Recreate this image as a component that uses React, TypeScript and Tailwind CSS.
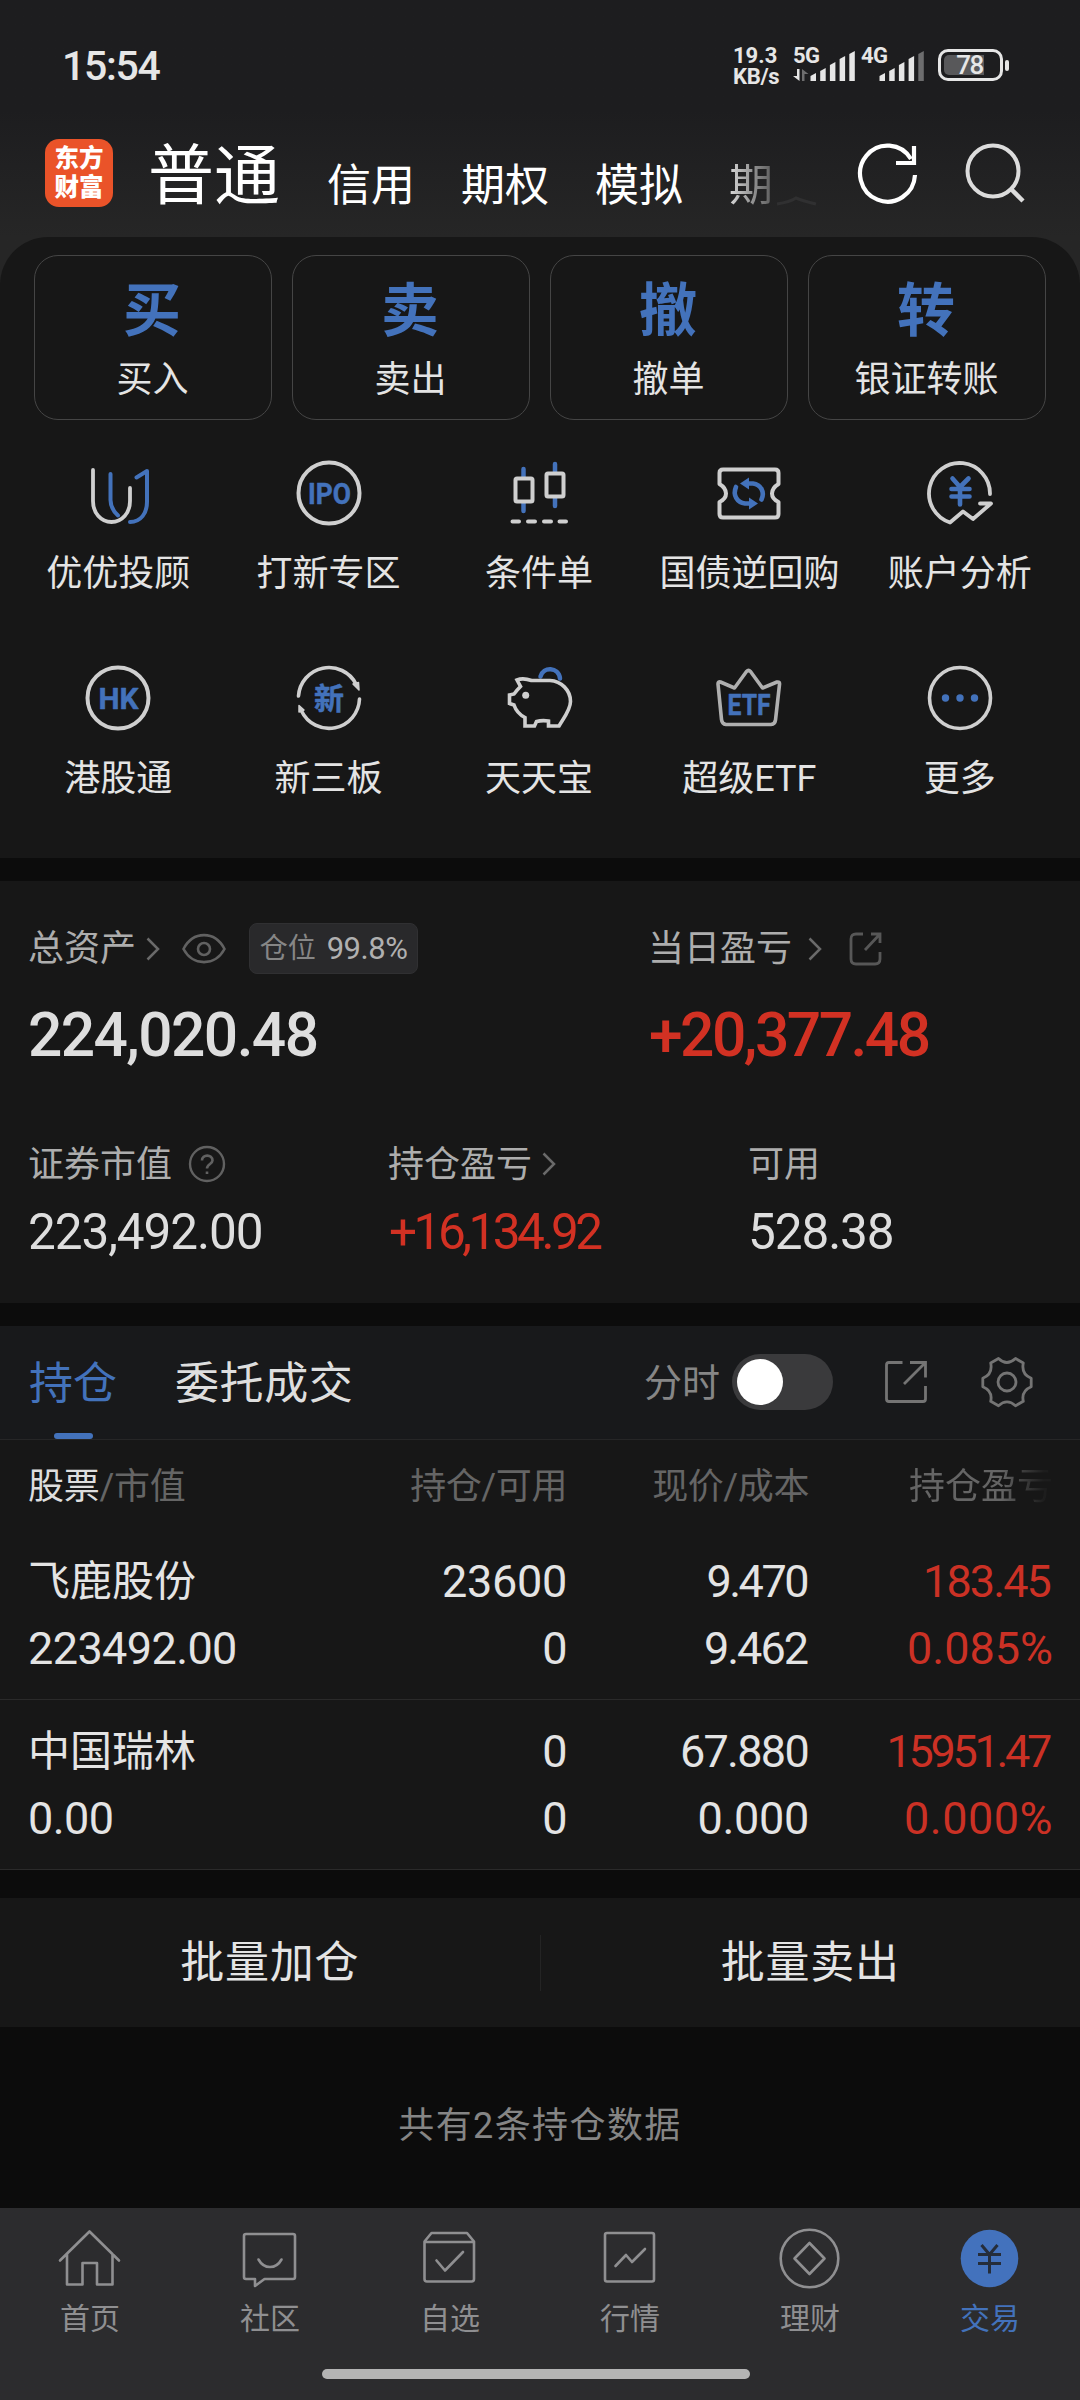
import type { ReactNode } from "react";

const BLUE = "#4372bb";
const LIGHT = "#cfcfcf";

const FONT = "font-['Roboto','Noto_Sans_CJK_SC',sans-serif]";

/* ---------- status bar ---------- */

function Bars({ dimLast = false }: { dimLast?: boolean }) {
  const tops = [24, 19, 13, 7, 2];
  return (
    <svg className="absolute bottom-0 right-0 h-[31px] w-[46px]" viewBox="0 0 46 31">
      {tops.map((t, i) => (
        <path
          key={i}
          d={`M${i * 9.7 + 0.5} 31V${t + 2}L${i * 9.7 + 6} ${t - 1}V31Z`}
          fill={dimLast && i === 4 ? "#6d6d6e" : "#e6e6e6"}
        />
      ))}
    </svg>
  );
}

function StatusBar() {
  return (
    <div className="flex h-[110px] items-start justify-between pl-[62px] pr-[71px] text-[#e6e6e6]">
      <div className="mt-[46px] text-[41px] font-medium leading-[41px] tracking-[-1.300px]">15:54</div>
      <div className="mt-[45px] flex h-[40px] items-start font-bold">
        <div className="w-[60px] text-[22px] leading-[21px]">
          <div>19.3</div>
          <div className="whitespace-nowrap tracking-[-0.3px]">KB/s</div>
        </div>
        <div className="relative h-[36px] w-[63px]">
          <span className="block text-[22px] leading-[22px] tracking-[-0.5px]">5G</span>
          <svg className="absolute bottom-0 left-0 h-[12px] w-[16px]" viewBox="0 0 16 12">
            <path d="M4 0H6.5V12L0 7H4Z" fill="#e6e6e6" />
            <path d="M9 12V0L15.5 5H11.5V12Z" fill="#6d6d6e" />
          </svg>
          <Bars />
        </div>
        <div className="relative ml-[5px] h-[36px] w-[64px]">
          <span className="block text-[22px] leading-[22px] tracking-[-0.5px]">4G</span>
          <Bars dimLast />
        </div>
        <div className="ml-[13px] mt-[4px] flex items-center gap-[2px]">
          <div className="h-[32px] w-[65px] rounded-[10px] border-[3px] border-[#e6e6e6] p-[3px]">
            <div className="relative flex h-[20px] items-center justify-center">
              <div className="absolute left-0 top-0 h-[20px] w-[40px] rounded-l-[5px] bg-[#58585a]" />
              <span className="relative -ml-[2px] text-[26px] font-medium leading-[20px] tracking-[-1.500px]">78</span>
            </div>
          </div>
          <div className="h-[11px] w-[4px] rounded-[2px] bg-[#e6e6e6]" />
        </div>
      </div>
    </div>
  );
}

/* ---------- header ---------- */

function Header() {
  return (
    <div className="flex h-[127px] items-start pl-[45px] text-white">
      <div className="mt-[29px] flex h-[68px] w-[68px] flex-col items-center justify-center rounded-[14px] bg-[#ea5329] text-[24.5px] font-black leading-[29px]">
        <span className="-mt-px">东方</span>
        <span>财富</span>
      </div>
      <div className="flex h-[127px] w-[704px] items-start overflow-hidden whitespace-nowrap pl-[35px]">
        <span className="mt-[32px] text-[66px] leading-[70px]">普通</span>
        <span className="ml-[47px] mt-[51px] text-[44px] leading-[50px]">信用</span>
        <span className="ml-[46px] mt-[51px] text-[44px] leading-[50px]">期权</span>
        <span className="ml-[46px] mt-[51px] text-[44px] leading-[50px]">模拟</span>
        <span className="ml-[46px] mt-[51px] bg-gradient-to-r from-[#d8d8d8] to-[#5c5c5c] bg-clip-text text-[44px] leading-[50px] text-transparent">
          期
        </span>
        <svg className="ml-[3px] mt-[86px] h-[10px] w-[42px] shrink-0" viewBox="0 0 42 10" fill="none" stroke="#303031" strokeWidth="3">
          <path d="M1 8Q14 6 20 2Q27 5 40 8" />
        </svg>
      </div>
      <svg className="ml-[37px] mt-[29px] h-[68px] w-[68px]" viewBox="0 0 68 68" fill="none" stroke="#fff" strokeWidth="4.2">
        <path d="M61 36A27.5 28 0 1 1 57 20" />
        <path d="M60 7V24H42" />
      </svg>
      <svg className="ml-[40px] mt-[30px] h-[68px] w-[68px]" viewBox="0 0 68 68" fill="none" stroke="#dcdcdc" strokeWidth="4">
        <circle cx="31" cy="31" r="25.500" />
        <path d="M49 49L61 61" strokeWidth="4.500" />
      </svg>
    </div>
  );
}

/* ---------- quick actions ---------- */

const actions = [
  { glyph: "买", label: "买入" },
  { glyph: "卖", label: "卖出" },
  { glyph: "撤", label: "撤单" },
  { glyph: "转", label: "银证转账" },
];

function IconBox({ children }: { children: ReactNode }) {
  return (
    <svg
      className="h-[72px] w-[72px]"
      viewBox="0 0 72 72"
      fill="none"
      stroke={LIGHT}
      strokeWidth="4"
      strokeLinecap="round"
      strokeLinejoin="round"
    >
      {children}
    </svg>
  );
}

function IconText({ children, x, y, size, width }: { children: string; x: number; y: number; size: number; width: number }) {
  return (
    <text
      x={x}
      y={y}
      fontSize={size}
      fontWeight="700"
      fill={BLUE}
      stroke={BLUE}
      strokeWidth="0.500"
      textLength={width}
      lengthAdjust="spacingAndGlyphs"
    >
      {children}
    </text>
  );
}

const shortcuts: { label: string; icon: ReactNode }[] = [
  {
    label: "优优投顾",
    icon: (
      <>
        <g stroke={BLUE}>
          <path d="M28.500 17V43C28.500 50 31 54 36 58.500" />
          <path d="M48 65C59 65 65 56 65 45V14L54.500 20.500" />
        </g>
        <path d="M11 13V44C11 56 19 65 29.500 65S48 56 48 44V31" strokeWidth="3.800" />
      </>
    ),
  },
  {
    label: "打新专区",
    icon: (
      <>
        <circle cx="36" cy="36" r="30.500" />
        <IconText x={15} y={46.5} size={29} width={43}>IPO</IconText>
      </>
    ),
  },
  {
    label: "条件单",
    icon: (
      <>
        <path d="M20.500 12V20M20.500 46V54M52 7V15M52 41V49" stroke={BLUE} strokeWidth="4.500" />
        <rect x="12.500" y="21.500" width="17" height="23" rx="1.500" />
        <rect x="43.500" y="16.500" width="17" height="23" rx="1.500" />
        <path d="M9.500 64.500H16M25 64.500H32M41 64.500H48M56.500 64.500H63" />
      </>
    ),
  },
  {
    label: "国债逆回购",
    icon: (
      <>
        <path d="M10 12.500H62Q65.500 12.500 65.500 16V27Q59 31 59 36.500T65.500 45V57Q65.500 60.500 62 60.500H10Q6.500 60.500 6.500 57V45Q13 42 13 36.500T6.500 27V16Q6.500 12.500 10 12.500Z" />
        <g stroke={BLUE} strokeWidth="4.600">
          <path d="M23 30C19.500 38 24 45.500 32 46.500H38" />
          <path d="M48.500 42.500C52 35 48 27.500 40 26.500H34" />
        </g>
        <path d="M27 26.500L36 20.500V32.500ZM45 46.500L36 40.500V52.500Z" fill={BLUE} stroke="none" />
      </>
    ),
  },
  {
    label: "账户分析",
    icon: (
      <>
        <path d="M66 37A30.500 30.500 0 1 0 26 65.500L39 54.500L49 62L67 46.500H56" strokeWidth="3.800" />
        <path d="M28.500 21.500L36 30L44.500 21.500M36 30V47.500M27.500 32H45.500M27.500 39.500H45.500" stroke={BLUE} strokeWidth="4.600" />
      </>
    ),
  },
  {
    label: "港股通",
    icon: (
      <>
        <circle cx="36" cy="36" r="30.500" />
        <IconText x={16.5} y={46.5} size={29} width={40}>HK</IconText>
      </>
    ),
  },
  {
    label: "新三板",
    icon: (
      <>
        <path d="M5.500 34A30.500 30.500 0 0 1 63 22M66.500 37A30.500 30.500 0 0 1 8.500 49" strokeWidth="3.600" />
        <path d="M60 22L65.500 20.500L66 28ZM6 50V43.500L11 48Z" fill={LIGHT} strokeWidth="1.500" />
        <IconText x={21} y={46.5} size={30} width={30}>新</IconText>
      </>
    ),
  },
  {
    label: "天天宝",
    icon: (
      <>
        <path d="M37.500 14.500C40 4.500 55.500 4.500 57 16.500" stroke={BLUE} strokeWidth="4.500" />
        <path
          d="M14 18Q20 15.500 28.500 18.500H47C58 19 67.500 28 67.500 39.500C67.500 48 60 57 56 64H45.500V59Q39 58 33.500 59.500L31.500 64H22V55.500C16 52.500 12.500 47.500 11 43L6.500 41.500V33L11 32Q14 28 17.500 24.500Z"
          strokeWidth="3.600"
          strokeLinejoin="miter"
        />
        <circle cx="22.700" cy="33.300" r="3.500" fill={LIGHT} stroke="none" />
      </>
    ),
  },
  {
    label: "超级ETF",
    icon: (
      <>
        <path
          d="M8.500 57.500L5 22Q5 19.500 7.500 20L21.500 26L33.500 9.500Q35.500 7.500 37.500 9.500L49.500 26L64 20Q67 19.500 66.500 22.500L62.500 58Q62 62 58 62.500H13Q9 62 8.500 57.500Z"
          stroke="#afafaf"
          strokeWidth="3.600"
        />
        <IconText x={14.5} y={53} size={30} width={43}>ETF</IconText>
      </>
    ),
  },
  {
    label: "更多",
    icon: (
      <>
        <circle cx="36" cy="36" r="30.500" strokeWidth="3.600" />
        <g fill={BLUE} stroke="none">
          <circle cx="21.500" cy="36" r="3.700" />
          <circle cx="36" cy="36" r="3.700" />
          <circle cx="50.500" cy="36" r="3.700" />
        </g>
      </>
    ),
  },
];

function QuickPanel() {
  return (
    <div className="h-[621px] rounded-t-[48px] bg-[#171717] pt-[18px]">
      <div className="grid grid-cols-4 gap-[20px] px-[34px]">
        {actions.map((a) => (
          <div key={a.label} className="flex h-[165px] flex-col items-center rounded-[24px] border border-[#454545] pt-[21px]">
            <span className="-ml-[2px] text-[58px] font-bold leading-[68px] text-[#4372bb]">{a.glyph}</span>
            <span className="-ml-px mt-[12px] text-[36px] leading-[46px] text-[#e4e4e4]">{a.label}</span>
          </div>
        ))}
      </div>
      <div className="mt-[37px] grid grid-cols-5 pl-[13px] pr-[15px]">
        {shortcuts.map((s) => (
          <div key={s.label} className="flex h-[205px] flex-col items-center">
            <IconBox>{s.icon}</IconBox>
            <span className="mt-[22px] whitespace-nowrap text-[36px] leading-[46px] text-[#e4e4e4]">{s.label}</span>
          </div>
        ))}
      </div>
    </div>
  );
}

/* ---------- assets ---------- */

function Chevron({ className }: { className: string }) {
  return (
    <svg className={`h-[24px] w-[14px] ${className}`} viewBox="0 0 14 24" fill="none" stroke="#6a6a6a" strokeWidth="2.500">
      <path d="M1.500 1.500L12 12L1.500 22.500" />
    </svg>
  );
}

function AssetPanel() {
  return (
    <div className="h-[422px] bg-[#171717] pt-[42px] text-[36px] text-[#adadad]">
      <div className="flex pl-[28px]">
        <div className="w-[620px]">
          <div className="flex h-[51px] items-center">
            <span className="pt-px leading-[46px]">总资产</span>
            <Chevron className="ml-[10px]" />
            <svg className="ml-[22px] h-[32px] w-[44px]" viewBox="0 0 44 32" fill="none" stroke="#616161" strokeWidth="2.600">
              <path d="M1.500 16C11 -2.500 33 -2.500 42.500 16C33 33.500 11 33.500 1.500 16Z" />
              <circle cx="22" cy="16" r="6" />
            </svg>
            <div className="ml-[23px] flex h-[51px] w-[169px] items-center justify-center gap-[11px] rounded-[8px] border border-[#303032] bg-[#29292b] text-[28px] leading-[36px]">
              <span className="pt-px text-[#868686]">仓位</span>
              <span className="pt-px text-[31px] tracking-[-0.500px] text-[#b0b0b0]">99.8%</span>
            </div>
          </div>
        </div>
        <div className="flex h-[51px] items-center">
          <span className="pt-px leading-[46px]">当日盈亏</span>
          <Chevron className="ml-[16px]" />
          <svg className="ml-[27px] h-[34px] w-[34px]" viewBox="0 0 34 34" fill="none" stroke="#575757" strokeWidth="2.800">
            <path d="M14 2H7Q2 2 2 7V27Q2 32 7 32H26Q31 32 31 27V20" />
            <path d="M22 2H31V11M31 2L16 18" />
          </svg>
        </div>
      </div>
      <div className="mt-[30px] flex h-[64px] items-center pl-[28px] text-[60.500px] font-medium leading-[64px]">
        <span className="w-[621px] tracking-[-1.600px] text-[#dedede]">224,020.48</span>
        <span className="tracking-[-2.500px] text-[#d23123]">+20,377.48</span>
      </div>
      <div className="mt-[72px] flex h-[48px] items-center pl-[28px]">
        <div className="flex w-[360px] items-center">
          <span className="pt-[2px] leading-[46px]">证券市值</span>
          <svg className="ml-[16px] h-[38px] w-[38px]" viewBox="0 0 38 38" fill="none" stroke="#616161" strokeWidth="2.400">
            <circle cx="19" cy="19" r="17" />
            <path d="M14 15.500C14 9 24.500 9 24.500 15.500C24.500 19 19 19 19 23.500M19 26.500V29" strokeWidth="2.600" />
          </svg>
        </div>
        <div className="flex w-[360px] items-center">
          <span className="pt-[2px] leading-[46px]">持仓盈亏</span>
          <Chevron className="ml-[10px]" />
        </div>
        <span className="pt-[2px] leading-[46px]">可用</span>
      </div>
      <div className="mt-[19px] flex h-[50px] items-center pl-[28px] text-[49.500px] leading-[50px] tracking-[-1.100px] text-[#dedede]">
        <span className="w-[361px]">223,492.00</span>
        <span className="w-[359px] tracking-[-3.500px] text-[#d23123]">+16,134.92</span>
        <span>528.38</span>
      </div>
    </div>
  );
}

/* ---------- holdings ---------- */

function TabsBar() {
  return (
    <div className="flex h-[114px] border-b border-[#262627] bg-[#18191b] pl-[29px]">
      <div className="flex w-[88px] flex-col items-center">
        <span className="mt-[33px] text-[44px] leading-[50px] text-[#4372bb]">持仓</span>
        <div className="mt-[24px] h-[6px] w-[39px] rounded-[3px] bg-[#4372bb]" />
      </div>
      <span className="ml-[58px] mt-[33px] w-[180px] whitespace-nowrap text-[44px] leading-[50px] tracking-[0.600px] text-[#dedede]">
        委托成交
      </span>
      <span className="ml-[289px] mt-[34px] text-[38px] leading-[46px] text-[#868686]">分时</span>
      <div className="ml-[12px] mt-[28px] h-[56px] w-[101px] rounded-full bg-[#3a3a3c] p-[5px]">
        <div className="h-[46px] w-[46px] rounded-full bg-white" />
      </div>
      <svg className="ml-[49px] mt-[31px] h-[50px] w-[50px]" viewBox="0 0 50 50" fill="none" stroke="#747474" strokeWidth="2.800">
        <path d="M20.500 5.500H7Q4.500 5.500 4.500 8V42Q4.500 44.500 7 44.500H41Q43.500 44.500 43.500 42V29" />
        <path d="M28 5.500H43.500V20.500M43.500 5.500L22 27" />
      </svg>
      <svg className="ml-[45px] mt-[26px] h-[60px] w-[60px]" viewBox="0 0 60 60" fill="none" stroke="#747474" strokeWidth="2.800" strokeLinejoin="round">
        <path d="M21.500 6.500Q29.700 14.500 38.500 6.500L46.300 11Q44 22 54.200 26.300V34.700Q44 39 46.300 49.300L38.500 53.700Q30 46 21.500 53.700L13.700 49.300Q16 39 5.800 34.700V26.300Q16 22 13.700 11Z" />
        <circle cx="30" cy="30" r="9" />
      </svg>
    </div>
  );
}

const COLS = "grid grid-cols-[296px_242px_242px_242px] pl-[29px]";

type Num = { text: string; fit?: string };

const rows: { name: string; value: string; cells: [Num, Num][] }[] = [
  {
    name: "飞鹿股份",
    value: "223492.00",
    cells: [
      [{ text: "23600", fit: "tracking-[-0.300px]" }, { text: "0" }],
      [
        { text: "9.470", fit: "tracking-[-2.500px] mr-[2px]" },
        { text: "9.462", fit: "tracking-[-2.000px] mr-[2px]" },
      ],
      [
        { text: "183.45", fit: "tracking-[-1.900px] mr-[1px]" },
        { text: "0.085%", fit: "tracking-[0] -mr-[2px]" },
      ],
    ],
  },
  {
    name: "中国瑞林",
    value: "0.00",
    cells: [
      [{ text: "0" }, { text: "0" }],
      [
        { text: "67.880", fit: "tracking-[-1.700px] mr-[1px]" },
        { text: "0.000", fit: "tracking-[-0.300px]" },
      ],
      [
        { text: "15951.47", fit: "tracking-[-3.300px] mr-[2px]" },
        { text: "0.000%", fit: "tracking-[0.500px] -mr-[2px]" },
      ],
    ],
  },
];

function Holdings() {
  return (
    <div className="bg-[#171717]">
      <div className={`${COLS} h-[90px] items-center pt-[3px] text-[36px] leading-[46px] text-[#656565]`}>
        <span className="-ml-px tracking-[-0.300px]">
          <span className="text-[#dedede]">股票</span>/市值
        </span>
        <span className="text-right tracking-[-0.400px]">持仓/可用</span>
        <span className="text-right tracking-[-0.400px]">现价/成本</span>
        <span className="ml-[100px] whitespace-nowrap bg-gradient-to-r from-[#656565] from-65% to-[#1d1d1d] to-95% bg-clip-text text-transparent">
          持仓盈亏
        </span>
      </div>
      {rows.map((r) => (
        <div key={r.name} className={`${COLS} h-[170px] border-b border-[#2a2a2a] pt-[18px] text-[#e4e4e4]`}>
          <div className="-ml-px flex flex-col leading-[67px]">
            <span className="text-[42px]">{r.name}</span>
            <span className="text-[45px] tracking-[-0.600px]">{r.value}</span>
          </div>
          {r.cells.map((pair, i) => (
            <div
              key={i}
              className={`flex flex-col items-end text-[45px] leading-[67px] tracking-[-0.500px] ${i === 2 ? "text-[#cb3125]" : ""}`}
            >
              {pair.map((n, j) => (
                <span key={j} className={n.fit}>
                  {n.text}
                </span>
              ))}
            </div>
          ))}
        </div>
      ))}
    </div>
  );
}

/* ---------- bottom navigation ---------- */

const tabs: { label: string; icon: ReactNode; active?: boolean }[] = [
  {
    label: "首页",
    icon: <path d="M2 34.500L31.500 5.500L61 34.500M9 28V58.500H24.500V37H39V58.500H54.500V28" />,
  },
  {
    label: "社区",
    icon: (
      <>
        <path d="M8 8H55Q57 8 57 10V51Q57 53 55 53H26.500L17 60V53H8Q6 53 6 51V10Q6 8 8 8Z" />
        <path d="M20.500 33.500C26 43.500 38 43.500 43.500 33.500" />
      </>
    ),
  },
  {
    label: "自选",
    icon: (
      <>
        <path d="M6.500 15.500L13.500 7H49L56 15.500V53Q56 55.500 53.500 55.500H9Q6.500 55.500 6.500 53ZM6.500 16H56" />
        <path d="M18.500 34.500L27 44.500L45 26" />
      </>
    ),
  },
  {
    label: "行情",
    icon: (
      <>
        <rect x="7" y="7" width="49" height="48.500" rx="2" />
        <path d="M17.500 40L28 29L34 36L47 23" />
      </>
    ),
  },
  {
    label: "理财",
    icon: (
      <>
        <circle cx="31.500" cy="32.500" r="28.800" />
        <path d="M31.500 17L46.500 32.500L31.500 48L16.500 32.500Z" />
      </>
    ),
  },
  {
    label: "交易",
    active: true,
    icon: (
      <>
        <circle cx="31.500" cy="32.500" r="28.800" fill="#4372bd" stroke="none" />
        <path d="M23.500 19L31.500 28.500L39.500 19M31.500 28.500V47.500M20 28.500H43M20 37.500H43" stroke="#252d3a" strokeWidth="3" strokeLinecap="butt" />
      </>
    ),
  },
];

function BottomNav() {
  return (
    <div className="h-[192px] bg-[#2c2c2e]">
      <div className="grid h-[161px] grid-cols-6 pt-[18px]">
        {tabs.map((t) => (
          <div key={t.label} className={`flex flex-col items-center ${t.active ? "text-[#4372bb]" : "text-[#8f8f91]"}`}>
            <svg
              className="-ml-px h-[64px] w-[64px]"
              viewBox="0 0 64 64"
              fill="none"
              stroke="#8f8f91"
              strokeWidth="2.600"
              strokeLinecap="round"
              strokeLinejoin="round"
            >
              {t.icon}
            </svg>
            <span className="mt-[10px] text-[30px] leading-[38px]">{t.label}</span>
          </div>
        ))}
      </div>
      <div className="ml-[322px] h-[10px] w-[428px] rounded-full bg-[#b4b4b4]" />
    </div>
  );
}

export default function App() {
  return (
    <div className={`flex h-[2400px] w-[1080px] flex-col overflow-hidden bg-[#0c0c0c] ${FONT}`}>
      <div className="bg-gradient-to-b from-[#1d1d1f] from-[110px] to-[#262626] to-[237px]">
        <StatusBar />
        <Header />
        <QuickPanel />
      </div>
      <div className="h-[23px]" />
      <AssetPanel />
      <div className="h-[23px]" />
      <TabsBar />
      <Holdings />
      <div className="mt-[28px] flex h-[129px] items-center bg-[#171717] text-[44px] leading-[50px] tracking-[0.700px] text-[#e4e4e4]">
        <span className="flex-1 pt-px text-center">批量加仓</span>
        <div className="h-[56px] w-px bg-[#242424]" />
        <span className="flex-1 pt-px text-center">批量卖出</span>
      </div>
      <div className="flex flex-1 items-center justify-center pt-[16px] text-[36px] leading-[46px] tracking-[1.400px] text-[#858585]">
        共有2条持仓数据
      </div>
      <BottomNav />
    </div>
  );
}
